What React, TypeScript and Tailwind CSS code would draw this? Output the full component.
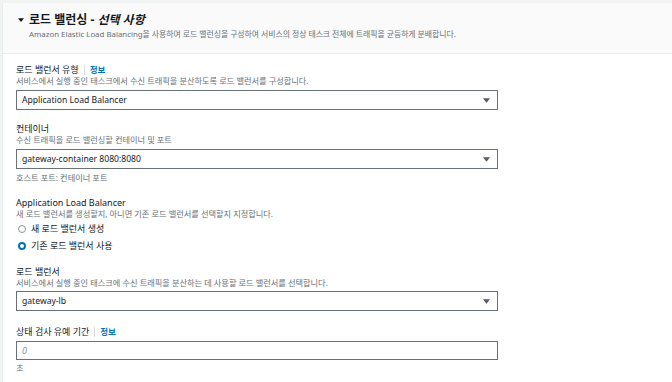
import React from 'react';

const font = "font-['Noto_Sans','Noto_Sans_CJK_KR',sans-serif]";

const Caret = ({ className = '' }: { className?: string }) => (
  <svg viewBox="0 0 8 5" className={className} fill="currentColor">
    <path d="M0 0h8L4 5z" />
  </svg>
);

const Info = () => (
  <>
    <span className="mx-[5px] h-[10px] w-px bg-[#d5dbdb]" />
    <span className="text-[#0073bb] font-bold text-[8.5px]">정보</span>
  </>
);

const Label = ({ children, info }: { children: React.ReactNode; info?: boolean }) => (
  <div className="flex items-center h-[11px] leading-[11px] text-[9px] text-[#16191f]">
    <span>{children}</span>
    {info && <Info />}
  </div>
);

const Desc = ({ children }: { children: React.ReactNode }) => (
  <div className="h-[11px] leading-[11px] text-[8.2px] text-[#687078]">{children}</div>
);

const Select = ({ value, className = '' }: { value: string; className?: string }) => (
  <div
    className={`flex items-center justify-between w-[482px] h-[20px] border border-[#687078] bg-white pl-[5px] pr-[7px] ${className}`}
  >
    <span className="text-[8.6px] text-[#16191f]">{value}</span>
    <Caret className="w-[7px] h-[5px] text-[#545b64]" />
  </div>
);

const Radio = ({ checked, label }: { checked?: boolean; label: string }) => (
  <div className="flex items-center h-[12px] gap-[5px]">
    <span
      className={
        checked
          ? 'w-[8px] h-[8px] rounded-full border-[2.5px] border-[#0073bb] bg-white ml-[2px]'
          : 'w-[8px] h-[8px] rounded-full border border-[#879596] bg-white ml-[2px]'
      }
    />
    <span className="text-[9px] text-[#16191f]">{label}</span>
  </div>
);

export default function App() {
  return (
    <div className={`w-[672px] h-[382px] overflow-hidden bg-[#f2f3f3] pt-[3px] ${font}`}>
      <div className="ml-[2px] h-full border-l border-[#eaeded] bg-white">
        <div className="bg-[#fafafa] border-b border-[#eaeded] pl-[15px] pt-[10px] pb-[13px]">
          <div className="flex items-center h-[14px] leading-[14px]">
            <Caret className="w-[6px] h-[4px] text-[#16191f]" />
            <h2 className="ml-[5px] text-[12px] font-bold text-[#16191f]">
              로드 밸런싱 - <span className="italic">선택 사항</span>
            </h2>
          </div>
          <p className="ml-[11px] mt-[2px] leading-[11px] text-[7.85px] text-[#687078]">
            Amazon Elastic Load Balancing을 사용하여 로드 밸런싱을 구성하여 서비스의 정상 태스크 전체에 트래픽을 균등하게 분배합니다.
          </p>
        </div>

        <div className="pl-[13px] pt-[10px] flex flex-col">
          <Label info>로드 밸런서 유형</Label>
          <Desc>서비스에서 실행 중인 태스크에서 수신 트래픽을 분산하도록 로드 밸런서를 구성합니다.</Desc>
          <Select value="Application Load Balancer" className="mt-[4px]" />

          <div className="mt-[13px]">
            <Label>컨테이너</Label>
          </div>
          <Desc>수신 트래픽을 로드 밸런싱할 컨테이너 및 포트</Desc>
          <Select value="gateway-container 8080:8080" className="mt-[4px]" />
          <div className="mt-[3px]">
            <Desc>호스트 포트: 컨테이너 포트</Desc>
          </div>

          <div className="mt-[14px]">
            <Label>Application Load Balancer</Label>
          </div>
          <Desc>새 로드 밸런서를 생성할지, 아니면 기존 로드 밸런서를 선택할지 지정합니다.</Desc>
          <div className="mt-[4px] flex flex-col gap-[5px]">
            <Radio label="새 로드 밸런서 생성" />
            <Radio checked label="기존 로드 밸런서 사용" />
          </div>

          <div className="mt-[14px]">
            <Label>로드 밸런서</Label>
          </div>
          <Desc>서비스에서 실행 중인 태스크에 수신 트래픽을 분산하는 데 사용할 로드 밸런서를 선택합니다.</Desc>
          <Select value="gateway-lb" className="mt-[3px]" />

          <div className="mt-[15px]">
            <Label info>상태 검사 유예 기간</Label>
          </div>
          <div className="mt-[4px] flex items-center w-[482px] h-[19px] border border-[#687078] bg-white pl-[5px]">
            <span className="text-[9px] italic text-[#879596]">0</span>
          </div>
          <div className="mt-[2px]">
            <Desc>초</Desc>
          </div>
        </div>
      </div>
    </div>
  );
}
